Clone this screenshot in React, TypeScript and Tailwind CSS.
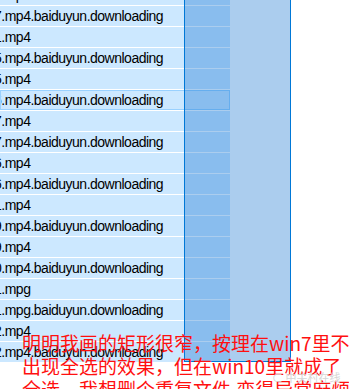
import React from "react";

type Row = { lead: string; name: string; focus?: boolean };

const rows: Row[] = [
    { lead: "3", name: ".mp4" },
    { lead: "7", name: ".mp4.baiduyun.downloading" },
    { lead: "1", name: ".mp4" },
    { lead: "5", name: ".mp4.baiduyun.downloading" },
    { lead: "5", name: ".mp4" },
    { lead: "6", name: ".mp4.baiduyun.downloading", focus: true },
    { lead: "7", name: ".mp4" },
    { lead: "7", name: ".mp4.baiduyun.downloading" },
    { lead: "6", name: ".mp4" },
    { lead: "6", name: ".mp4.baiduyun.downloading" },
    { lead: "1", name: ".mp4" },
    { lead: "9", name: ".mp4.baiduyun.downloading" },
    { lead: "9", name: ".mp4" },
    { lead: "0", name: ".mp4.baiduyun.downloading" },
    { lead: "1", name: ".mpg" },
    { lead: "1", name: ".mpg.baiduyun.downloading" },
    { lead: "2", name: ".mp4" },
    { lead: "2", name: ".mp4.baiduyun.downloading" },
];

const App: React.FC = () => {
    return (
        <div className="relative w-[349px] h-[389px] overflow-hidden bg-white font-['Liberation_Sans',Arial,sans-serif]">
            {/* file list */}
            <div className="flex flex-col w-[230px] -mt-[15px]">
                {rows.map((row, i) => (
                    <div key={i} className="border-b border-white">
                        <div
                            className={
                                row.focus
                                    ? "h-[20px] bg-[#cce8ff] border border-[#99d1ff] overflow-hidden"
                                    : "h-[20px] bg-[#cce8ff] overflow-hidden"
                            }
                        >
                            <div
                                className={
                                    row.focus
                                        ? "-ml-[7px] -mt-px whitespace-nowrap text-[14px] leading-[20px] tracking-[-0.5px] text-black"
                                        : "-ml-[6px] whitespace-nowrap text-[14px] leading-[20px] tracking-[-0.5px] text-black"
                                }
                            >
                                {row.lead}
                                {row.name}
                            </div>
                        </div>
                    </div>
                ))}
            </div>

            {/* rubber band selection */}
            <div className="absolute left-[184px] top-[-2px] w-[107px] h-[364px] border border-[#0078d7] bg-[rgba(0,102,204,0.33)]" />

            {/* red annotation */}
            <div className="absolute left-[22px] top-[331px] w-[340px] text-[19px] leading-[23px] text-[#ff1010] whitespace-nowrap font-['Noto_Sans_CJK_SC',sans-serif]">
                <div>明明我画的矩形很窄，按理在win7里不会</div>
                <div>出现全选的效果，但在win10里就成了</div>
                <div>全选，我想删个重复文件,变得异常麻烦</div>
            </div>

            {/* watermark */}
            <div className="absolute left-[272px] top-[370px] text-[11px] leading-[14px] text-[#d6d6d6] whitespace-nowrap font-['Noto_Sans_CJK_SC',sans-serif]">
                ⊂ 中关村在线
            </div>
        </div>
    );
};

export default App;
